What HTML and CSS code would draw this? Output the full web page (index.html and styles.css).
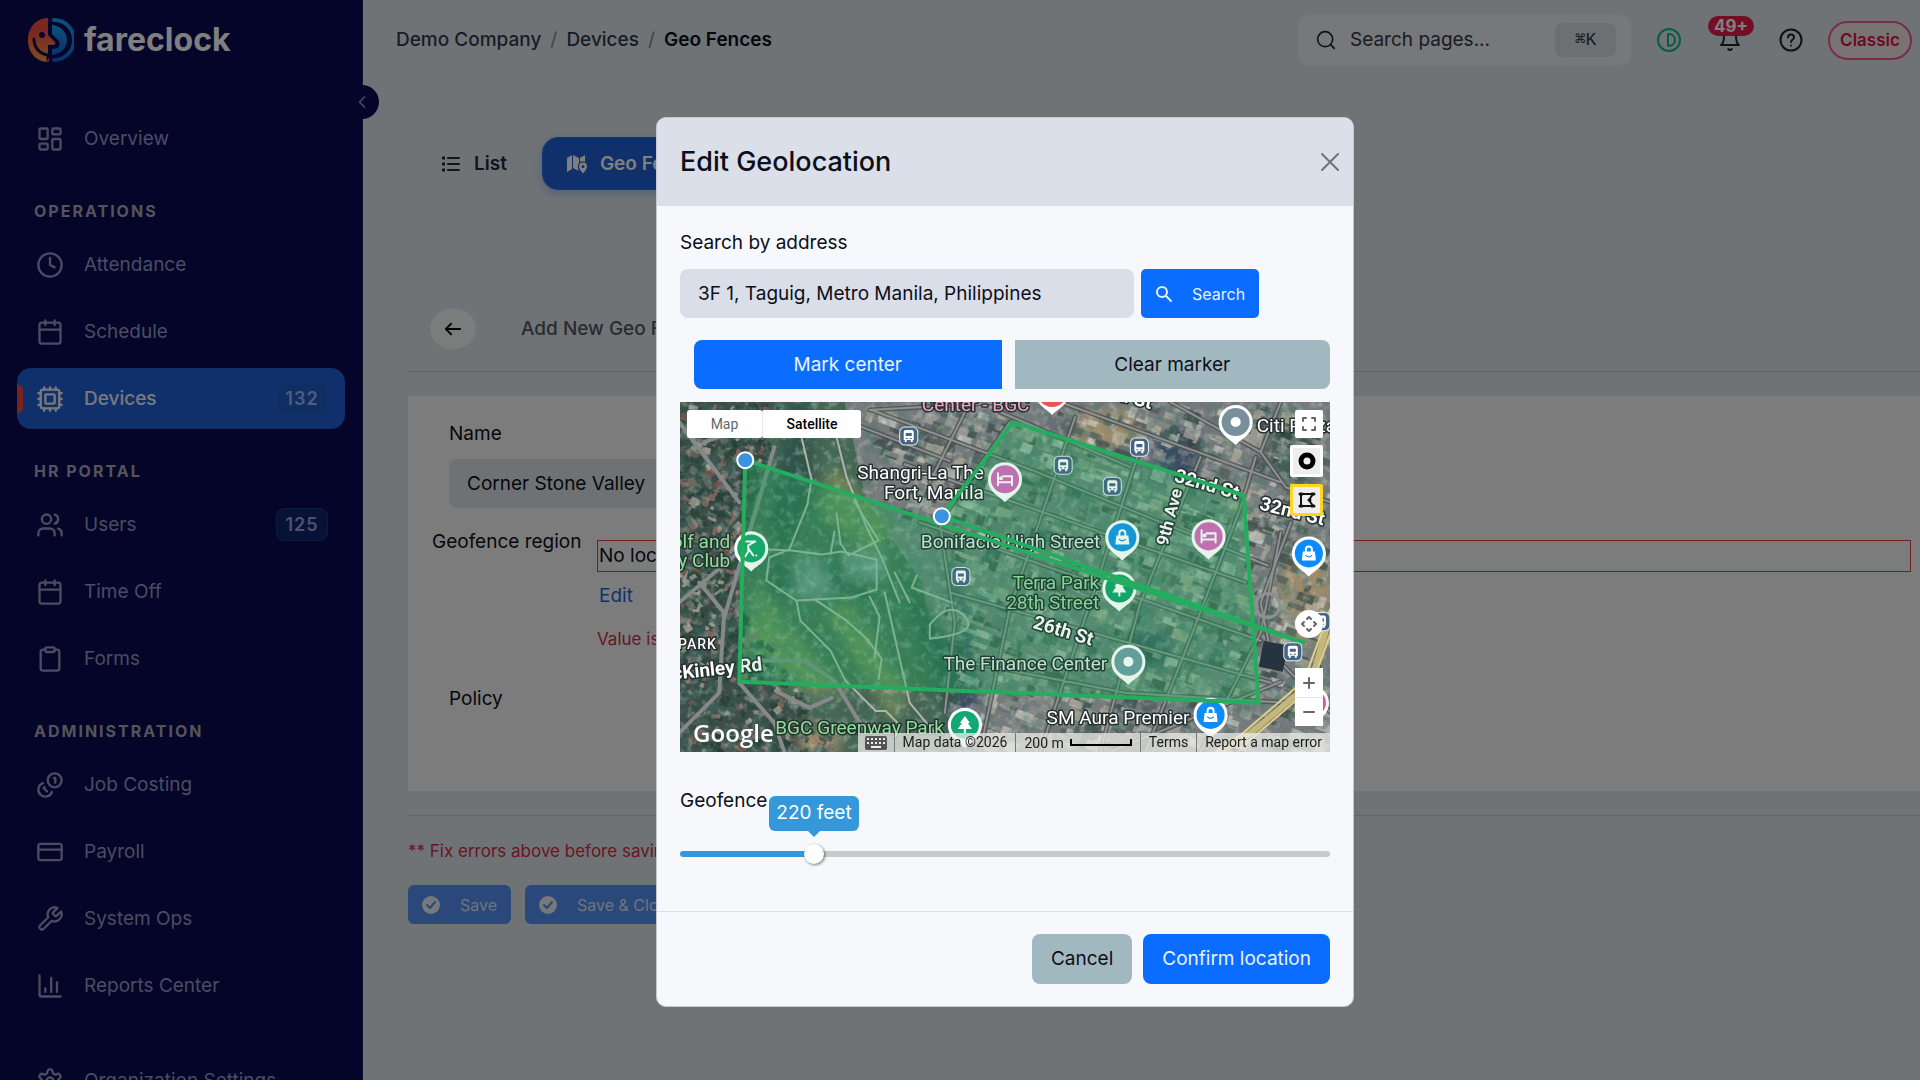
FILE: index.html
```html
<!DOCTYPE html>
<html lang="en">
<head>
<meta charset="utf-8">
<title>Geo Fences - fareclock</title>
<link rel="stylesheet" href="styles.css">
</head>
<body>
<aside class="sidebar">
  <a class="brand" href="#">
    <svg class="brand-mark" viewBox="0 0 46 46">
      <defs>
        <linearGradient id="face" x1="0" y1="0" x2="0" y2="1"><stop offset="0.3" stop-color="#f4513f"/><stop offset="1" stop-color="#ff9a3c"/></linearGradient>
        <linearGradient id="dial" x1="0" y1="0" x2="0" y2="1"><stop offset="0" stop-color="#18a4f4"/><stop offset="1" stop-color="#1263d8"/></linearGradient>
      </defs>
      <path fill="url(#face)" d="M20 1v17l7 7c1 2 0 3-3 3h-4v17C8 45 0 35 0 23S8 1 20 1z"/>
      <path fill="none" stroke="#0a0852" stroke-width="3" stroke-linecap="round" d="M6 22c0 9 6 15 14 16v8"/>
      <path fill="url(#face)" d="M20 41c2 1 1 4-1 4z"/>
      <circle cx="14" cy="18" r="3" fill="#0a0852"/>
      <path fill="none" stroke="url(#dial)" stroke-width="4" stroke-linecap="round" d="M26 3a20 20 0 0 1 0 40"/>
      <path fill="url(#dial)" d="M24 8c9 1 15 7 15 15s-6 14-15 15v-6c6 0 9-3 7-8l-7-7z"/>
    </svg>
    <span class="brand-name">fareclock</span>
  </a>
  <button class="collapse" aria-label="Collapse menu"><svg viewBox="0 0 24 24"><path d="m15 18-6-6 6-6"/></svg></button>
  <nav class="nav">
    <section class="group">
      <a class="item" href="#"><svg viewBox="0 0 24 24"><rect x="3" y="3" width="7" height="9" rx="1"/><rect x="14" y="3" width="7" height="5" rx="1"/><rect x="14" y="12" width="7" height="9" rx="1"/><rect x="3" y="16" width="7" height="5" rx="1"/></svg>Overview</a>
    </section>
    <section class="group">
      <h2>OPERATIONS</h2>
      <a class="item" href="#"><svg viewBox="0 0 24 24"><circle cx="12" cy="12" r="10"/><path d="M12 6v6l4 2"/></svg>Attendance</a>
      <a class="item" href="#"><svg viewBox="0 0 24 24"><rect x="3" y="4" width="18" height="18" rx="2"/><path d="M8 2v4M16 2v4M3 10h18"/></svg>Schedule</a>
      <a class="item active" href="#"><svg viewBox="0 0 24 24"><rect x="4" y="4" width="16" height="16" rx="2"/><rect x="8" y="8" width="8" height="8" rx="1"/><path d="M12 20v2M12 2v2M17 20v2M17 2v2M2 12h2M2 17h2M2 7h2M20 12h2M20 17h2M20 7h2M7 20v2M7 2v2"/></svg>Devices<span class="count">132</span></a>
    </section>
    <section class="group">
      <h2>HR PORTAL</h2>
      <a class="item" href="#"><svg viewBox="0 0 24 24"><path d="M16 21v-2a4 4 0 0 0-4-4H6a4 4 0 0 0-4 4v2"/><circle cx="9" cy="7" r="4"/><path d="M22 21v-2a4 4 0 0 0-3-3.87M16 3.13a4 4 0 0 1 0 7.75"/></svg>Users<span class="count">125</span></a>
      <a class="item" href="#"><svg viewBox="0 0 24 24"><rect x="3" y="4" width="18" height="18" rx="2"/><path d="M8 2v4M16 2v4M3 10h18"/></svg>Time Off</a>
      <a class="item" href="#"><svg viewBox="0 0 24 24"><rect x="8" y="2" width="8" height="4" rx="1"/><path d="M16 4h2a2 2 0 0 1 2 2v14a2 2 0 0 1-2 2H6a2 2 0 0 1-2-2V6a2 2 0 0 1 2-2h2"/></svg>Forms</a>
    </section>
    <section class="group">
      <h2>ADMINISTRATION</h2>
      <a class="item" href="#"><svg viewBox="0 0 24 24"><circle cx="16" cy="8" r="6"/><path d="M5.91 10.37A6 6 0 1 0 13.66 18M15.5 6h1v4M7.29 13.88l-.7.71 2.82 2.82"/></svg>Job Costing</a>
      <a class="item" href="#"><svg viewBox="0 0 24 24"><rect x="2" y="5" width="20" height="14" rx="2"/><path d="M2 10h20"/></svg>Payroll</a>
      <a class="item" href="#"><svg viewBox="0 0 24 24"><path d="M14.7 6.3a1 1 0 0 0 0 1.4l1.6 1.6a1 1 0 0 0 1.4 0l3.77-3.77a6 6 0 0 1-7.94 7.94l-6.91 6.91a2.12 2.12 0 0 1-3-3l6.91-6.91a6 6 0 0 1 7.94-7.94l-3.76 3.76z"/></svg>System Ops</a>
      <a class="item" href="#"><svg viewBox="0 0 24 24"><path d="M3 3v16a2 2 0 0 0 2 2h16M18 17V9M13 17V5M8 17v-3"/></svg>Reports Center</a>
    </section>
    <section class="group last">
      <a class="item" href="#"><svg viewBox="0 0 24 24"><path d="M12.22 2h-.44a2 2 0 0 0-2 2v.18a2 2 0 0 1-1 1.73l-.43.25a2 2 0 0 1-2 0l-.15-.08a2 2 0 0 0-2.73.73l-.22.38a2 2 0 0 0 .73 2.73l.15.1a2 2 0 0 1 1 1.72v.51a2 2 0 0 1-1 1.74l-.15.09a2 2 0 0 0-.73 2.73l.22.38a2 2 0 0 0 2.73.73l.15-.08a2 2 0 0 1 2 0l.43.25a2 2 0 0 1 1 1.73V20a2 2 0 0 0 2 2h.44a2 2 0 0 0 2-2v-.18a2 2 0 0 1 1-1.73l.43-.25a2 2 0 0 1 2 0l.15.08a2 2 0 0 0 2.73-.73l.22-.39a2 2 0 0 0-.73-2.73l-.15-.08a2 2 0 0 1-1-1.74v-.5a2 2 0 0 1 1-1.74l.15-.09a2 2 0 0 0 .73-2.73l-.22-.38a2 2 0 0 0-2.73-.73l-.15.08a2 2 0 0 1-2 0l-.43-.25a2 2 0 0 1-1-1.73V4a2 2 0 0 0-2-2z"/><circle cx="12" cy="12" r="3"/></svg>Organization Settings</a>
    </section>
  </nav>
</aside>

<main class="page">
  <header class="topbar">
    <nav class="crumbs" aria-label="Breadcrumb">
      <a href="#">Demo Company</a><span class="slash">/</span><a href="#">Devices</a><span class="slash">/</span><strong>Geo Fences</strong>
    </nav>
    <button class="page-search">
      <svg viewBox="0 0 24 24"><circle cx="11" cy="11" r="9"/><path d="m22 22-4.500-4.500"/></svg>
      <span>Search pages...</span><kbd>⌘K</kbd>
    </button>
    <div class="tools">
      <button class="tool status" aria-label="Status"><svg viewBox="0 0 24 24"><circle cx="12" cy="12" r="11"/><path d="M11 6v12h1a6 6 0 0 0 0-12z"/></svg></button>
      <button class="tool" aria-label="Notifications"><svg viewBox="0 0 24 24"><path d="M6 8a6 6 0 0 1 12 0c0 7 3 9 3 9H3s3-2 3-9"/><path d="M10.300 21a1.940 1.940 0 0 0 3.400 0"/></svg><span class="alerts">49+</span></button>
      <button class="tool" aria-label="Help"><svg viewBox="0 0 24 24"><circle cx="12" cy="12" r="10.500"/><path d="M9 9.500a3 3 0 0 1 6 0c0 2-3 2.500-3 4.500M12 17.500v.1"/></svg></button>
    </div>
    <button class="classic">Classic</button>
  </header>

  <div class="tabs">
    <button class="tab"><svg viewBox="0 0 20 20"><path fill="none" stroke="currentColor" stroke-width="2" d="M7 4h11M7 10h11M7 16h11"/><path d="M1 2.500h3v3H1zM1 8.500h3v3H1zM1 14.500h3v3H1z"/></svg>List</button>
    <button class="tab on"><svg viewBox="0 0 20 20"><path d="M0 4l5-3v14l-5 3zM6 1l6 3v5c-2 3-1 6 0 8l-6-3zM13 4l5-3v7c-2-1-4-1-5 0z"/><path fill-rule="evenodd" d="M16 8.500a4 4 0 0 1 4 4c0 3-4 7-4 7s-4-4-4-7a4 4 0 0 1 4-4zm0 2.500a1.500 1.500 0 1 0 0 3 1.500 1.500 0 0 0 0-3z"/></svg>Geo Fences</button>
  </div>

  <div class="editor">
    <div class="editor-head">
      <button class="back" aria-label="Back"><svg viewBox="0 0 20 20"><path d="M18 10H3M8 4l-6 6 6 6"/></svg></button>
      <h1>Add New Geo Fence</h1>
    </div>
    <form class="card">
      <div class="name-field">
        <label for="name">Name</label>
        <input id="name" type="text" value="Corner Stone Valley">
      </div>
      <div class="region">
        <span class="region-label">Geofence region</span>
        <div class="region-value">
          <div class="invalid">No location</div>
          <a href="#">Edit</a>
          <p>Value is required</p>
        </div>
      </div>
      <div class="policy">Policy</div>
    </form>
    <footer class="editor-foot">
      <p>** Fix errors above before saving</p>
      <div class="saves">
        <button><svg viewBox="0 0 18 18"><circle cx="9" cy="9" r="9"/><path d="m5 9 3 3 5-6"/></svg>Save</button>
        <button><svg viewBox="0 0 18 18"><circle cx="9" cy="9" r="9"/><path d="m5 9 3 3 5-6"/></svg>Save &amp; Close</button>
      </div>
    </footer>
  </div>
</main>

<div class="backdrop">
  <div class="modal" role="dialog" aria-labelledby="modal-title">
    <header class="modal-head">
      <h2 id="modal-title">Edit Geolocation</h2>
      <button class="close" aria-label="Close"><svg viewBox="0 0 20 20"><path d="M2 2l16 16M18 2 2 18"/></svg></button>
    </header>
    <div class="modal-body">
      <label for="address">Search by address</label>
      <div class="address-row">
        <input id="address" type="text" value="3F 1, Taguig, Metro Manila, Philippines">
        <button class="find"><svg viewBox="0 0 18 18"><circle cx="7" cy="7" r="5"/><path d="m11 11 5 5"/></svg>Search</button>
      </div>
      <div class="marker-row">
        <button class="mark">Mark center</button>
        <button class="clear">Clear marker</button>
      </div>
      <div class="map">
        <svg class="map-art" viewBox="0 0 650 349" preserveAspectRatio="xMidYMid slice">
          <defs>
            <filter id="grain" x="0" y="0" width="100%" height="100%"><feTurbulence type="fractalNoise" baseFrequency="0.13" numOctaves="4" seed="8"/><feColorMatrix values="0 0 0 0 0.86  0 0 0 0 0.88  0 0 0 0 0.82  3 0 0 0 -1.500"/></filter>
            <filter id="shade" x="0" y="0" width="100%" height="100%"><feTurbulence type="fractalNoise" baseFrequency="0.07" numOctaves="4" seed="21"/><feColorMatrix values="0 0 0 0 0.06  0 0 0 0 0.17  0 0 0 0 0.14  0 4 0 0 -1.800"/></filter>
            <filter id="soft"><feGaussianBlur stdDeviation="6"/></filter>
            <g id="pin"><path d="M0 23c-5-6-17-10-17-23a17 17 0 0 1 34 0c0 13-12 17-17 23z" fill="#fff"/></g>
            <g id="bed" fill="none" stroke="#fff" stroke-width="2"><path d="M-7-6V6M7-3V6M-7 3H7M-2-3h9"/><circle cx="-4" cy="-1" r="1"/></g>
            <g id="bag"><path fill="#fff" d="M-6-2H6L7 7H-7z"/><path fill="none" stroke="#fff" stroke-width="2" d="M-3-2v-2a3 3 0 0 1 6 0v2"/><path fill="none" stroke="#1681d6" stroke-width="1" d="M-3 2q3 3 6 0"/></g>
            <g id="tree" fill="#fff"><path d="M0-9-5-2h2l-4 6H7L3-2h2zM-1 4h2v4h-2z"/></g>
            <g id="bus"><rect x="-9" y="-9" width="18" height="18" rx="5" fill="#466484" stroke="#e4edf4" stroke-width="1"/><path fill="#fff" d="M-5-4a2 2 0 0 1 2-2h6a2 2 0 0 1 2 2v8h-1v2H2V4h-4v2h-2V4h-1z"/><path fill="#466484" d="M-3-3h6v3h-6zM-3 2h2v1h-2zM1 2h2v1H1z"/></g>
          </defs>
          <rect width="650" height="349" fill="#757a7b"/>
          <path fill="#3a4d47" d="M0 0h95L60 180l30 90 80 79H0z"/>
          <path fill="#456552" d="M95 0h70l22 100 55 80 15 80 25 89H160L70 260 60 170z"/>
          <g filter="url(#soft)">
            <path fill="#2f5348" d="M110 0h20l5 90-30 60-15-30zM225 175l50 70 10 104-40-90zM90 160h110v30H95z"/>
            <path fill="#6d8658" d="M150 60l60 60-10 40-60-50zM75 180l90 110-30 10-70-60zM170 200l60 90-15 30-70-110z"/>
            <path fill="#8b9da2" d="M115 155h25l15 40h-40zM165 150h40v28h-40z" opacity=".8"/>
            <path fill="#3b4b60" d="M255 120l25 120-5 109h25l-5-120zM475 30h45v50h-45zM440 230h50v35h-50z"/>
            <path fill="#9b8b6a" d="M395 10h60v35h-60zM120 325h40v24h-40zM600 150h50v90h-50z"/>
            <path fill="#2e5142" d="M590 20h40v60h-30z"/>
          </g>
          <g id="blocks" opacity=".7"></g>
          <rect width="650" height="349" filter="url(#shade)" opacity=".4"/>
          <rect width="650" height="349" filter="url(#grain)" opacity=".3"/>
          <g fill="none" stroke="#4c5051" stroke-width="5" opacity=".8">
            <path d="M192 8l160 60 235 95M180 24l90 35M225 62l340 118M240 120l340 118M270 190l320 90M265 255l180 35 160 10M330 20l-70 100 15 100-10 90M395 15l-65 190-30 144M460 45l-45 140-55 164M520 55l-60 145-40 149M575 55l-15 50-50 130-45 114M600 130l-20 100-60 119M190 8l140-8M290 0l-40 80M320 10l130 55M380 0l220 80"/>
            <path d="M580 50l25 35 45 15M490 0l90 50 20-50M610 120l-30 80 10 50 60 60M430 349l170-70"/>
          </g>
          <g fill="none" stroke="#8d9190" stroke-width="2">
            <path d="M192 8l160 60 235 95M180 24l90 35M225 62l340 118M240 120l340 118M270 190l320 90M265 255l180 35 160 10M330 20l-70 100 15 100-10 90M395 15l-65 190-30 144M460 45l-45 140-55 164M520 55l-60 145-40 149M575 55l-15 50-50 130-45 114M600 130l-20 100-60 119M190 8l140-8M290 0l-40 80M320 10l130 55M380 0l220 80"/>
            <path d="M580 50l25 35 45 15M490 0l90 50 20-50M610 120l-30 80 10 50 60 60M430 349l170-70"/>
            <circle cx="587" cy="203" r="12" stroke-width="3"/>
          </g>
          <path fill="#26343f" d="M583 238l24 5-5 26-24-5z"/>
          <g fill="none" stroke="#b9beb4" stroke-width="2" opacity=".9">
            <path d="M122 35l10 42-4 25-18 45-20 8-3 23 30 20 55-3 25-8v-30l-35-8-20 3-30-4-22-1M157 35l10 40 20 50 15 30 18 45M157 111l4 30 8 12 30-15-25-40M151 152l4-23M117 198l4 20 30 30 15 30 30 30 10 0 14 14M137 198l30 20 20 18 15 20-3 20M190 194l10 20-5 40M205 190l25 110 25 30M215 170l15 30"/>
            <path d="M237 173l-5 12 40 15M250 222q20-25 35-8t-35 22z"/>
          </g>
          <g fill="none" stroke="#85898a" stroke-width="4">
            <path d="M0 20l60 80M25 40l70-25M0 200l65-55M20 180l25 30-5 80-40 40M95 45l-50 170M75 258l50 0 30 20 30 50M60 280l35 40 10 29M100 290l30 15 22-10"/>
          </g>
          <path fill="none" stroke="#c5b77c" stroke-width="6" d="M650 210l-20 70-60 50-30 19"/>
          <path fill="none" stroke="#e0cf89" stroke-width="2" d="M650 205l-27 73-63 54-25 17M650 230l-20 55-70 60"/>
          <path fill="#1fae5c" fill-opacity=".26" d="M66 58 623 240 262 114 333 20 563 93l15 207L60 279z"/>

          <g class="poi">
            <use href="#bus" x="229" y="34"/><use href="#bus" x="281" y="174"/><use href="#bus" x="459" y="45"/><use href="#bus" x="383" y="63"/><use href="#bus" x="432" y="84"/><use href="#bus" x="640" y="219"/>
            <text class="hotel" x="242" y="9">Center - BGC</text>
            <text class="end" x="304" y="77">Shangri-La The</text><text class="end" x="304" y="97">Fort, Manila</text>
            <text class="end park" x="51" y="146">Golf and</text><text class="end park" x="51" y="165">Country Club</text>
            <text class="end shop" x="420" y="146">Bonifacio High Street</text>
            <text class="end park" x="419" y="186">Terra Park</text><text class="end park" x="419" y="206">28th Street</text>
            <text class="end shop" x="427" y="267">The Finance Center</text>
            <text x="576" y="30">Citi Plaza</text>
            <text class="end" x="509" y="321">SM Aura Premier</text>
            <text class="end park" x="264" y="331">BGC Greenway Park</text>
            <text class="street caps" x="-1" y="246">PARK</text>
            <text class="street" transform="translate(-6 277) rotate(-6)">cKinley Rd</text>
            <text class="street" transform="translate(352 225) rotate(17)">26th St</text>
            <text class="street avenue" transform="translate(487 144) rotate(-75)">9th Ave</text>
            <text class="street" transform="translate(493 79) rotate(16)">32nd St</text>
            <text class="street" transform="translate(578 107) rotate(14)">32nd St</text>
            <text class="street" transform="translate(406 -9) rotate(14)">32nd St</text>
            <g transform="translate(72 146)"><use href="#pin"/><circle r="14" fill="#16a76c"/><path fill="none" stroke="#fff" stroke-width="2" d="M-5-7H4L-3-3v6l-3 5M-3 0l5 7"/><circle cx="5" cy="7" r="1" fill="#fff"/></g>
            <g transform="translate(325 77)"><use href="#pin"/><circle r="14" fill="#d768ba"/><use href="#bed"/></g>
            <g transform="translate(372 -10)"><use href="#pin"/><circle r="15" fill="#ef5350"/></g>
            <g transform="translate(555 20)"><use href="#pin"/><circle r="14" fill="#78909c"/><circle r="5" fill="#fff"/></g>
            <g transform="translate(442 135)"><use href="#pin"/><circle r="14" fill="#1295e6"/><use href="#bag"/></g>
            <g transform="translate(528 134)"><use href="#pin"/><circle r="14" fill="#d768ba"/><use href="#bed"/></g>
            <g transform="translate(628 151)"><use href="#pin"/><circle r="14" fill="#0a8cff"/><use href="#bag"/></g>
            <g transform="translate(439 186)"><use href="#pin"/><circle r="14" fill="#12a467"/><use href="#tree"/></g>
            <g transform="translate(448 259)"><use href="#pin"/><circle r="14" fill="#6d9da0"/><circle r="5" fill="#fff"/></g>
            <g transform="translate(530 312)"><use href="#pin"/><circle r="14" fill="#0a8cff"/><use href="#bag"/></g>
            <g transform="translate(285 322)"><use href="#pin"/><circle r="14" fill="#12a876"/><use href="#tree"/></g>
            <g transform="translate(631 300)"><use href="#pin"/><circle r="14" fill="#d954a5"/></g>
          </g>
          <path fill="#24ad5f" fill-opacity=".12" stroke="#24ad5f" stroke-width="4" d="M66 58 623 240 262 114 333 20 563 93l15 207L60 279z"/>
          <use href="#bus" x="612" y="249"/>
          <g fill="#3b92e0" stroke="#fff" stroke-width="2"><circle cx="66" cy="58" r="8"/><circle cx="262" cy="114" r="8"/></g>
          <text class="google" x="14" y="339">Google</text>
        </svg>
        <div class="map-type"><button>Map</button><button class="chosen">Satellite</button></div>
        <div class="map-tools">
          <button class="square" aria-label="Fullscreen"><svg viewBox="0 0 18 18"><path d="M3 6V3h3M12 3h3v3M15 12v3h-3M6 15H3v-3"/></svg></button>
          <button class="shape" aria-label="Draw circle"><svg viewBox="0 0 18 18"><circle cx="9" cy="9" r="6" stroke="#000" stroke-width="5"/></svg></button>
          <button class="shape selected" aria-label="Draw polygon"><svg viewBox="0 0 18 18"><path stroke="#111" d="M3 3h12l-4 6 4 6H3z"/><path stroke="#111" stroke-width="3" d="M2 3h2M14 3h2M2 15h2M14 15h2M11 9h1"/></svg></button>
        </div>
        <div class="map-nav">
          <button class="pan" aria-label="Pan"><svg viewBox="0 0 18 18"><path d="M7 4l2-2 2 2M7 14l2 2 2-2M4 7 2 9l2 2M14 7l2 2-2 2"/></svg></button>
          <div class="zoom"><button aria-label="Zoom in"><svg viewBox="0 0 18 18"><path d="M9 4v10M4 9h10"/></svg></button><button aria-label="Zoom out"><svg viewBox="0 0 18 18"><path d="M4 9h10"/></svg></button></div>
        </div>
        <div class="map-legal">
          <button aria-label="Keyboard shortcuts"><svg viewBox="0 0 22 14"><rect width="22" height="14" rx="2" fill="#555"/><path stroke="#eee" stroke-width="2" stroke-linecap="butt" stroke-dasharray="2 2" d="M2 3h18M2 7h18"/><path stroke="#eee" stroke-width="2" stroke-linecap="butt" d="M6 11h10"/></svg></button>
          <span>Map data ©2026</span>
          <span class="scale">200 m<i></i></span>
          <a href="#">Terms</a>
          <a href="#">Report a map error</a>
        </div>
      </div>
      <label class="fence-label" for="radius">Geofence</label>
      <div class="slider">
        <output for="radius">220 feet</output>
        <input id="radius" type="range" min="0" max="1115" value="220">
      </div>
    </div>
    <footer class="modal-foot">
      <button class="cancel">Cancel</button>
      <button class="confirm">Confirm location</button>
    </footer>
  </div>
</div>
<script src="map.js"></script>
</body>
</html>
```
FILE: styles.css
```css
* { box-sizing: border-box; }
body { margin: 0; height: 100vh; overflow: hidden; display: flex; font: 19px/24px Inter, "Liberation Sans", sans-serif; color: #0c0f18; background: #e0e7eb; }
button, input { font: inherit; color: inherit; border: 0; margin: 0; padding: 0; background: none; }
a { color: inherit; text-decoration: none; }
h1, h2, p { margin: 0; font: inherit; }
svg { display: block; fill: none; stroke: currentColor; stroke-width: 2; stroke-linecap: round; stroke-linejoin: round; flex: none; }

/* Sidebar */
.sidebar { position: relative; flex: none; width: 363px; height: 100vh; background: #0a0852; border-right: 1px solid #25246f; color: #9698c2; }
.brand { display: flex; align-items: center; gap: 10px; height: 108px; padding: 17px 28px 45px; }
.brand-mark { width: 46px; height: 46px; stroke: none; }
.brand-name { font-size: 32px; line-height: 40px; font-weight: 700; color: #fff; }
.collapse { position: absolute; left: 345px; top: 85px; width: 34px; height: 34px; border-radius: 50%; background: #0a0852; display: grid; place-items: center; z-index: 1; }
.collapse svg { width: 20px; height: 20px; }
.group { display: flex; flex-direction: column; gap: 6px; margin: 0 17px; }
.group + .group { margin-top: 18px; border-top: 1px solid #0d0b55; padding-top: 13px; }
.group.last.last { padding-top: 15px; }
.group h2 { padding: 0 17px 7px; font-size: 16px; line-height: 20px; font-weight: 700; letter-spacing: 2px; color: #a9a9b6; }
.item { position: relative; display: flex; align-items: center; gap: 20px; height: 61px; flex: none; padding: 0 17px 0 19px; border-radius: 14px; overflow: hidden; }
.item svg { width: 28px; height: 28px; }
.item.active { background: #1e60d4; color: #f2f3fa; font-weight: 500; }
.item.active::before { content: ""; position: absolute; left: 0; top: 17px; width: 6px; height: 28px; border-radius: 0 5px 5px 0; background: #f2463d; }
.count { margin-left: auto; width: 52px; height: 33px; border: 1px solid #163a80; border-radius: 8px; background: #10256e; font-size: 18px; line-height: 31px; font-weight: 600; text-align: center; letter-spacing: 1px; color: #98a6da; }
.active .count { background: #1f5cc9; border-color: #2665d0; color: #a5bbf2; }

/* Top bar */
.page { flex: 1; min-width: 0; }
.topbar { display: flex; align-items: center; height: 80px; padding: 0 8px 0 33px; gap: 7px; }
.crumbs { display: flex; gap: 9px; margin-right: auto; font-weight: 500; color: #30384c; }
.crumbs strong { font-weight: 600; color: #0b0f1c; }
.slash { color: #8b929c; }
.page-search { display: flex; align-items: center; gap: 14px; width: 333px; height: 50px; padding: 0 15px 0 18px; border-radius: 10px; background: #edf0f2; color: #30384c; }
.page-search svg { width: 20px; height: 20px; color: #1d2536; }
.page-search kbd { margin-left: auto; width: 61px; height: 34px; border-radius: 7px; background: #d9e0e3; font: 18px/34px "Liberation Mono", "DejaVu Sans Mono", monospace; text-align: center; }
.tools { display: flex; }
.tool { position: relative; width: 61px; height: 48px; display: grid; place-items: center; color: #1b2335; }
.tool svg { width: 24px; height: 24px; }
.tool.status { color: #10b981; }
.alerts { position: absolute; left: 9px; top: 0; width: 46px; height: 20px; border-radius: 10px; background: #e91d4c; color: #fff; font-size: 17px; line-height: 20px; font-weight: 700; }
.classic { width: 84px; height: 39px; border: 2px solid #ee5c85; border-radius: 20px; background: #f2e6e8; color: #d81448; font-size: 17px; font-weight: 600; }

/* Tabs */
.tabs { display: flex; gap: 10px; padding: 57px 0 0 53px; }
.tab { display: flex; align-items: center; gap: 13px; height: 53px; padding: 0 25px; border-radius: 16px; font-weight: 600; color: #222a3c; }
.tab svg { width: 20px; height: 20px; fill: currentColor; stroke: none; }
.tab.on { background: #1e60d4; color: #fff; border: 1px solid #2771e6; box-shadow: 0 3px 8px #1e60d455; padding: 0 24px; }

/* Geo fence form */
.editor { padding: 118px 0 0 45px; }
.editor-head { display: flex; align-items: center; gap: 45px; padding: 0 0 22px 22px; border-bottom: 1px solid #c5cbd1; }
.editor-head h1 { font-weight: 500; color: #52565d; }
.back { width: 46px; height: 41px; border-radius: 50%; background: #f7f8f8; display: grid; place-items: center; color: #000; }
.back svg { width: 18px; height: 18px; }
.card { margin-top: 24px; padding: 26px 9px 80px 24px; background: #f8f8f9; }
.name-field { display: flex; flex-direction: column; gap: 13px; margin-left: 17px; }
.name-field input { width: 60%; height: 49px; padding: 0 18px; border-radius: 8px; background: #dee4e8; }
.region { display: flex; margin-top: 22px; }
.region-label { width: 165px; flex: none; }
.region-value { flex: 1; padding-top: 10px; }
.invalid { height: 32px; padding: 3px 1px; border: 1px solid #e0403b; }
.region-value a { display: block; margin: 12px 2px 19px; color: #2665dc; }
.region-value p, .editor-foot p { font-size: 17px; color: #d22c48; }
.policy { margin: 36px 0 0 17px; }
.editor-foot { margin-top: 24px; border-top: 1px solid #c5cbd1; padding-top: 23px; }
.saves { display: flex; gap: 14px; margin-top: 22px; }
.saves button { display: flex; align-items: center; gap: 20px; height: 39px; padding: 0 14px; border-radius: 6px; background: #5590f2; color: #dfe8f8; font-size: 16px; }
.saves svg { width: 18px; height: 18px; }
.saves circle { fill: #edf1f8; stroke: none; }
.saves path { stroke: #5590f2; }

/* Modal */
.backdrop { position: fixed; inset: 0; z-index: 2; display: flex; justify-content: center; align-items: flex-start; padding: 117px 0 0 90px; background: rgba(0, 0, 0, .5); }
.modal { width: 698px; border: 1px solid #c3c8ce; border-radius: 10px; background: #f6f8fb; overflow: hidden; }
.modal button { border-radius: 8px; }
.modal-head { display: flex; align-items: center; justify-content: space-between; height: 88px; padding: 0 13px 0 23px; background: #dbdfe9; }
.modal-head h2 { font-size: 27px; line-height: 32px; font-weight: 500; }
.close { width: 20px; height: 20px; color: #6d727c; }
.modal-body { padding: 25px 23px 45px; }
.modal-body > label { display: block; }
.address-row { display: flex; gap: 7px; margin-top: 14px; }
.address-row input { width: 454px; height: 49px; padding: 0 18px; border-radius: 8px; background: #dadee8; }
.address-row .find { display: flex; align-items: center; gap: 19px; height: 49px; padding: 0 14px; border-radius: 5px; background: #0b6dff; color: #e6f0ff; font-size: 16px; }
.find svg { width: 18px; height: 18px; }
.marker-row { display: grid; grid-template-columns: 308fr 316fr; gap: 13px; margin: 22px 0 13px; padding-left: 14px; }
.marker-row button { height: 49px; }
.modal .mark { background: #0b6dff; color: #e9f2ff; border-radius: 8px 0 0 8px; }
.modal .clear { background: #a2b8c0; border-radius: 0 8px 8px 0; }

/* Map */
.map { position: relative; height: 350px; overflow: hidden; font: 14px/18px Roboto, sans-serif; }
.map-art { width: 100%; height: 100%; stroke: none; }
.poi text { font: 19px Roboto, sans-serif; fill: #fff; stroke: #25302f; stroke-width: 3px; paint-order: stroke; }
.poi .hotel { fill: #f3a2c8; }
.poi .park { fill: #8de09a; }
.poi .shop { fill: #cdeedd; }
.poi .end { text-anchor: end; }
.poi .street { font-weight: 700; }
.poi .avenue { font-size: 17px; }
.poi .caps { font-weight: 500; font-size: 14px; letter-spacing: 1px; }
.google { font: 600 24px "Open Sans", sans-serif; fill: #fff; stroke: #4a5a58; stroke-width: 1px; paint-order: stroke; }
.map button { border-radius: 2px; background: #fff; color: #666; }
.map-type { position: absolute; left: 7px; top: 8px; display: flex; height: 28px; border-radius: 2px; overflow: hidden; }
.map-type button { width: 75px; }
.map-type .chosen { width: 99px; border-left: 1px solid #e8e8e8; color: #000; font-weight: 500; }
.map-tools { position: absolute; right: 7px; top: 8px; display: flex; flex-direction: column; align-items: flex-end; gap: 7px; }
.map-tools button, .map-nav button { display: grid; place-items: center; }
.map-tools svg, .map-nav svg { width: 18px; height: 18px; }
.map-tools .square { width: 28px; height: 28px; }
.map-tools .shape { width: 33px; height: 32px; border: 3px solid #fff; background: #eee; }
.map-tools .selected { border-color: #ffd51e; }
.map-nav { position: absolute; right: 7px; bottom: 26px; display: flex; flex-direction: column; align-items: flex-end; gap: 30px; }
.map-nav .pan { width: 28px; height: 28px; border-radius: 50%; }
.zoom { width: 28px; background: #fff; }
.zoom button { width: 28px; height: 29px; }
.zoom button + button { border-top: 1px solid #e6e6e6; }
.map-legal { position: absolute; right: 0; bottom: 0; display: flex; height: 19px; background: rgba(236, 236, 232, .75); color: #1c1c1c; white-space: nowrap; }
.map-legal > * { padding: 0 8px; border-left: 1px solid #777; }
.map-legal > :first-child { border-left: 0; background: none; padding: 0 7px; }
.map-legal svg { width: 22px; height: 14px; stroke: none; }
.scale { display: flex; align-items: center; gap: 6px; }
.scale i { width: 62px; height: 7px; border: 2px solid #000; border-top: 0; }

/* Radius slider */
.modal-body .fence-label { margin-top: 37px; }
.slider { position: relative; margin-top: 29px; height: 24px; }
.slider output { position: absolute; left: 89px; top: -46px; width: 90px; height: 35px; border-radius: 6px; background: #3498db; color: #fff; line-height: 34px; text-align: center; }
.slider output::after { content: ""; position: absolute; left: 39px; top: 35px; border: 6px solid transparent; border-top-color: #3498db; border-bottom: 0; }
.slider input { display: block; appearance: none; width: 100%; height: 24px; }
.slider input::-webkit-slider-runnable-track { height: 6px; border-radius: 3px; background: linear-gradient(90deg, #3498db 20%, #c9cacb 20%); }
.slider input::-webkit-slider-thumb { appearance: none; width: 20px; height: 20px; margin-top: -7px; border-radius: 50%; background: #fff; box-shadow: 1px 1px 3px #0008; }
.modal-foot { display: flex; justify-content: flex-end; gap: 11px; padding: 22px 23px; border-top: 1px solid #dbe0e6; }
.modal-foot button { height: 50px; padding: 0 19px; }
.modal-foot .cancel { background: #a2b8c0; }
.modal-foot .confirm { background: #0b6dff; color: #e9f2ff; }
```
FILE: map.js
```js
// Scatter rooftops over the residential and downtown parts of the aerial view.
let seed = 17;
const rnd = () => (seed = (seed * 16807) % 2147483647) / 2147483647;
const layer = document.getElementById('blocks');
const roofs = ['#8c8e89', '#a5a49a', '#626a70', '#b4ab99', '#7a7f83', '#4c5a54', '#c9c8c0', '#34433f'];
const homes = ['#9a6f68', '#b3aa9a', '#243f35', '#6e7570', '#1f392f', '#2a4437', '#85564f', '#2e4a3c', '#26403a'];
function roof(x, y, w, h, turn, fill) {
  const r = document.createElementNS('http://www.w3.org/2000/svg', 'rect');
  r.setAttribute('width', w);
  r.setAttribute('height', h);
  r.setAttribute('fill', fill);
  r.setAttribute('transform', `translate(${x} ${y}) rotate(${turn})`);
  layer.append(r);
}
for (let i = 0; i < 1500; i++) {
  const y = rnd() * 349;
  const x = (y < 120 ? 185 + y / 3 : 245 + y / 12) + rnd() * 440;
  roof(x, y, 4 + rnd() * 14, 3 + rnd() * 9, 20, roofs[Math.floor(rnd() * roofs.length)]);
}
for (let i = 0; i < 650; i++) {
  const y = rnd() * 349;
  const edge = y < 180 ? 100 - y / 4 : 55 + (y - 180) * 0.6;
  roof(rnd() * edge, y, 3 + rnd() * 7, 3 + rnd() * 6, rnd() * 60, homes[Math.floor(rnd() * homes.length)]);
}
```
